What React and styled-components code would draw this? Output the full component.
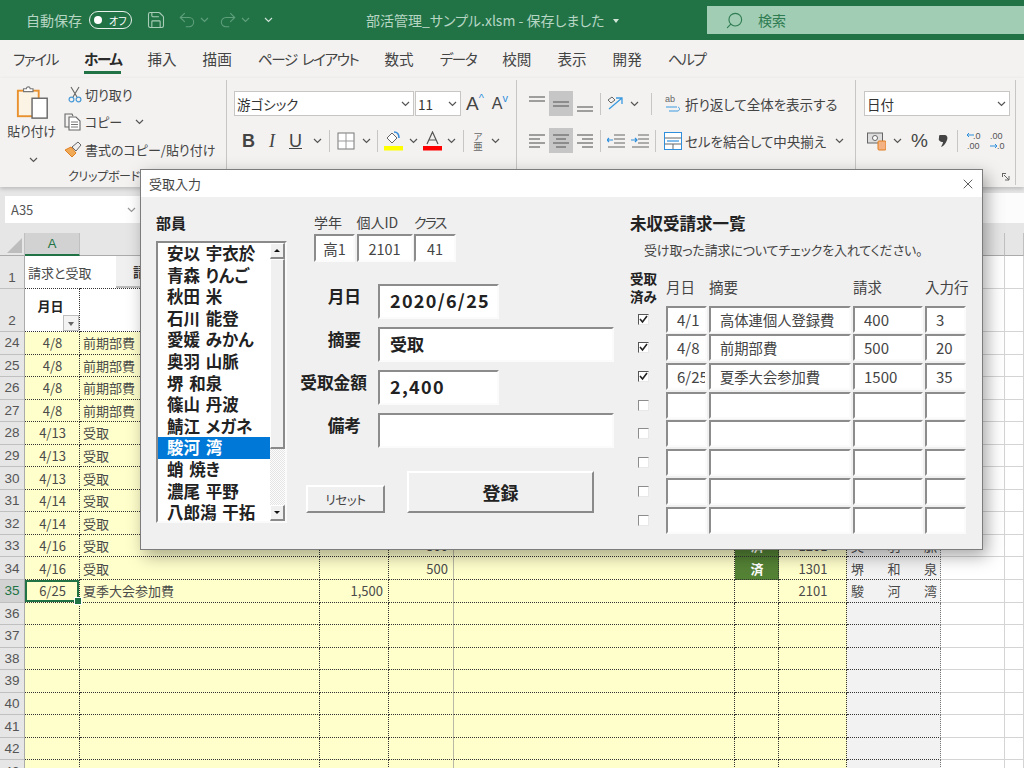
import styled, { createGlobalStyle } from 'styled-components';
import { Search, X, Save, Undo2, Redo2 } from 'lucide-react';

const GlobalStyle = createGlobalStyle`
  html, body {
    margin: 0;
    padding: 0;
    background: #fff;
    overflow: hidden;
  }
  body {
    font-family: "Noto Sans CJK JP", "Noto Sans", sans-serif;
    font-feature-settings: "palt";
    color: #444;
  }
  * { box-sizing: border-box; }
`;

const Page = styled.div`
  position: relative;
  width: 1024px;
  height: 768px;
  overflow: hidden;
  display: flex;
  flex-direction: column;
`;

/* title bar */
const TitleBar = styled.div`
  height: 40px;
  flex: none;
  background: #217346;
  display: flex;
  align-items: center;
  color: #b7d5c3;
  font-size: 14px;
  padding-left: 26px;
`;

const AutoSave = styled.span`
  width: 63px;
`;

const Toggle = styled.div`
  width: 43px;
  height: 18px;
  border: 1.5px solid #e8f1ec;
  border-radius: 9px;
  display: flex;
  align-items: center;
  gap: 7px;
  padding-left: 4px;
  color: #fff;
  font-size: 10px;
  margin-right: 14px;
  &::before {
    content: "";
    width: 8px;
    height: 8px;
    background: #fff;
    border-radius: 50%;
  }
`;

const QuickIcons = styled.div`
  display: flex;
  align-items: center;
  width: 220px;
`;

const DocTitle = styled.div`
  width: 341px;
  display: flex;
  align-items: center;
  gap: 9px;
  font-size: 14px;
  white-space: nowrap;
`;

const Caret = styled.span`
  width: 0;
  height: 0;
  border: 3.5px solid transparent;
  border-top: 4px solid #d4e5da;
  margin-top: 4px;
`;

const SearchBox = styled.div`
  width: 317px;
  height: 28px;
  background: #a0cdb3;
  display: flex;
  align-items: center;
  gap: 14px;
  padding-left: 18px;
  color: #2f7c52;
  font-size: 14px;
`;

/* tabs */
const Tabs = styled.div`
  height: 38px;
  flex: none;
  background: #f3f2f1;
  display: flex;
  align-items: flex-start;
  padding: 8px 0 0 13px;
  gap: 26px;
  font-size: 14.6px;
  color: #444;
`;

const Tab = styled.div`
  height: 26px;
  line-height: 22px;
  white-space: pre;
  word-spacing: ${(props) => (props.$kana ? 3 : 0)}px;
  letter-spacing: ${(props) => (props.$kana ? -1.4 : 0)}px;
  font-weight: ${(props) => (props.$active ? 700 : 400)};
  color: ${(props) => (props.$active ? '#2b2b2b' : '#444')};
  border-bottom: ${(props) => (props.$active ? '3px solid #217346' : '3px solid transparent')};
`;

/* ribbon */
const Ribbon = styled.div`
  height: 109px;
  flex: none;
  background: #f3f2f1;
  display: flex;
  box-shadow: 0 2px 4px rgba(0, 0, 0, 0.18);
  position: relative;
  z-index: 1;
  font-size: 13px;
  color: #444;
`;

const Group = styled.div`
  width: ${(props) => props.$w}px;
  height: 105px;
  margin-top: 2px;
  border-right: 1px solid #c8c6c4;
  flex: none;
  position: relative;
  display: flex;
  flex-direction: column;
`;

const ClipGrid = styled.div`
  display: flex;
  padding-top: 5px;
  height: 87px;
`;

const PasteCol = styled.div`
  width: 61px;
  display: flex;
  flex-direction: column;
  align-items: center;
  padding-left: 5px;
  font-size: 13px;
  letter-spacing: -0.2px;
  white-space: nowrap;
`;

const PasteLabel = styled.span`
  margin: 1px 0 0 -3px;
`;

const PasteChevron = styled.span`
  margin-top: 8px;
`;

const ClipActions = styled.div`
  display: flex;
  flex-direction: column;
  gap: 5.5px;
  margin-top: -2px;
`;

const ClipAction = styled.div`
  height: 22px;
  display: flex;
  align-items: center;
  gap: 3px;
  white-space: nowrap;
  font-size: 13px;
`;

const IconSlot = styled.span`
  width: 21px;
  display: flex;
  justify-content: flex-end;
`;

const GroupLabel = styled.div`
  font-size: 12px;
  letter-spacing: -0.3px;
  margin-left: 68px;
  white-space: nowrap;
`;

const ToolRow = styled.div`
  display: flex;
  align-items: center;
  height: 25px;
  margin-top: ${(props) => props.$mt || 0}px;
  padding-left: ${(props) => props.$pl || 0}px;
`;

const Select = styled.div`
  width: ${(props) => props.$w}px;
  height: 25px;
  background: #fff;
  border: 1px solid #c8c6c4;
  margin-right: ${(props) => props.$mr || 0}px;
  display: flex;
  align-items: center;
  justify-content: space-between;
  padding: 0 3px 0 2px;
  font-size: 13.5px;
  color: #333;
`;

const Sep = styled.span`
  width: 1px;
  height: 22px;
  background: #c8c6c4;
  margin: 0 ${(props) => props.$m ?? 8}px;
  flex: none;
`;

const Gap = styled.span`
  width: ${(props) => props.$w}px;
  flex: none;
`;

const ToolBtn = styled.span`
  display: flex;
  align-items: center;
  justify-content: center;
  width: ${(props) => props.$w || 24}px;
  height: 25px;
  flex: none;
  background: ${(props) => (props.$on ? '#c6c6c6' : 'transparent')};
`;

const Glyph = styled.span`
  font-family: ${(props) => (props.$serif ? '"Liberation Serif", serif' : '"Liberation Sans", sans-serif')};
  font-size: ${(props) => props.$size || 18}px;
  font-weight: ${(props) => (props.$bold ? 700 : 400)};
  font-style: ${(props) => (props.$italic ? 'italic' : 'normal')};
  text-decoration: ${(props) => (props.$under ? 'underline' : 'none')};
  color: ${(props) => props.$color || '#444'};
  margin-left: ${(props) => props.$ml || 0}px;
  margin-bottom: ${(props) => props.$mb || 0}px;
  line-height: 1;
`;

const PhoneticGlyph = styled.span`
  font-size: 9.5px;
  line-height: 10px;
  color: #666;
  width: 14px;
  text-align: center;
`;

const ToolText = styled.span`
  font-size: 13.5px;
  white-space: nowrap;
  margin-left: 3px;
`;

const Launcher = styled.svg`
  position: absolute;
  right: 5px;
  bottom: 4px;
`;

/* formula bar */
const FormulaBar = styled.div`
  height: 46px;
  flex: none;
  background: #e6e6e6;
  display: flex;
  align-items: flex-start;
  padding: 9px 0 0 5px;
  gap: 6px;
`;

const NameBox = styled.div`
  width: 135px;
  height: 27px;
  background: #fff;
  padding: 0 4px 0 6px;
  font-size: 13px;
  color: #555;
  display: flex;
  justify-content: space-between;
  align-items: center;
`;

const FormulaInput = styled.div`
  flex: 1;
  height: 30px;
  margin-top: -3px;
  background: #fcfcfc;
`;

/* sheet */
const COLS = '25px 55px 240px 69px 65px 281px 44px 68px 94px 64px 1fr';

const Row = styled.div`
  display: grid;
  grid-template-columns: ${COLS};
  height: ${(props) => props.$h || 22.55}px;
  flex: none;
`;

const HeadCell = styled.div`
  background: ${(props) => (props.$on ? '#d2d2d2' : '#e6e6e6')};
  color: ${(props) => (props.$on ? '#217346' : '#555')};
  font-family: "Liberation Sans", sans-serif;
  font-size: 13px;
  display: flex;
  align-items: center;
  justify-content: center;
  border-right: 1px solid #c0c0c0;
  border-bottom: ${(props) => (props.$on ? '2px solid #217346' : '1px solid #ababab')};
`;

const Corner = styled.div`
  background: #e6e6e6;
  border-right: 1px solid #c0c0c0;
  border-bottom: 1px solid #ababab;
  position: relative;
  &::after {
    content: "";
    position: absolute;
    right: 2px;
    bottom: 2px;
    border-style: solid;
    border-width: 0 0 15px 15px;
    border-color: transparent transparent #bdbdbd transparent;
  }
`;

const RowHead = styled.div`
  background: ${(props) => (props.$on ? '#d2d2d2' : '#e6e6e6')};
  color: ${(props) => (props.$on ? '#217346' : '#555')};
  font-family: "Liberation Sans", sans-serif;
  font-size: 13.5px;
  display: flex;
  justify-content: center;
  align-items: ${(props) => (props.$low ? 'flex-end' : 'center')};
  padding-bottom: ${(props) => (props.$low ? 3 : 0)}px;
  border-bottom: 1px solid #c0c0c0;
  border-right: 1px solid #ababab;
`;

const Cell = styled.div`
  position: relative;
  z-index: ${(props) => (props.$over ? 1 : 'auto')};
  min-width: 0;
  white-space: nowrap;
  font-size: 13px;
  color: #4a4a4a;
  background: ${(props) => props.$bg || '#ffffcc'};
  border-bottom: 1px dotted #333;
  border-right: ${(props) => props.$rb || '1px dotted #333'};
  display: flex;
  align-items: center;
  justify-content: ${(props) => props.$align || 'flex-start'};
  padding: 0 ${(props) => props.$pr ?? 2}px 0 ${(props) => props.$pl ?? 3}px;
`;

const BlankCell = styled.div`
  border-bottom: 1px solid #d4d4d4;
  border-right: 1px solid #d4d4d4;
  background: #fff;
`;

const SelectedCell = styled(Cell)`
  box-shadow: inset 0 0 0 2px #217346;
  &::after {
    content: "";
    position: absolute;
    right: -3px;
    bottom: -3px;
    width: 6px;
    height: 6px;
    background: #217346;
    border: 1px solid #fff;
    z-index: 1;
  }
`;

const TopTag = styled.div`
  margin-left: 36px;
  align-self: stretch;
  flex: 1;
  background: #f0f0f0;
  border-bottom: 2px solid #bbb;
  font-weight: 700;
  font-size: 13px;
  color: #333;
  padding-left: 17px;
  display: flex;
  align-items: center;
`;

const ColumnTitle = styled.strong`
  color: #222;
  margin-bottom: 10px;
`;

const FilterBtn = styled.div`
  position: absolute;
  right: 0;
  bottom: 0;
  width: 16px;
  height: 16px;
  background: #f3f3f3;
  border: 1px solid #bdbdbd;
  display: flex;
  align-items: center;
  justify-content: center;
  &::after {
    content: "";
    border: 3.5px solid transparent;
    border-top: 4px solid #666;
    margin-top: 4px;
  }
`;

const DoneCell = styled(Cell)`
  background: #548235;
  color: #fff;
  font-weight: 700;
`;

/* dialog */
const Dialog = styled.div`
  position: absolute;
  left: 140px;
  top: 169px;
  width: 843px;
  height: 381px;
  background: #f0f0f0;
  border: 1px solid #7c7c7c;
  box-shadow: 4px 6px 16px rgba(0, 0, 0, 0.35);
  z-index: 5;
`;

const DialogTitle = styled.div`
  height: 27px;
  background: #fff;
  display: flex;
  align-items: center;
  justify-content: space-between;
  padding: 0 6px 0 8px;
  font-size: 13px;
  color: #444;
`;

const DialogBody = styled.div`
  display: grid;
  grid-template-columns: 131px 314px 336px;
  column-gap: 13px;
  padding: 16px 0 0 15px;
`;

const SectionLabel = styled.div`
  font-weight: 700;
  font-size: 15px;
  line-height: 20px;
  color: #222;
  margin-bottom: 8px;
`;

const ListBox = styled.div`
  height: 282px;
  background: #fff;
  border-top: 2px solid #8a8a8a;
  border-left: 2px solid #8a8a8a;
  border-right: 2px solid #fafafa;
  border-bottom: 2px solid #fafafa;
  display: flex;
  overflow: hidden;
`;

const ListItems = styled.div`
  flex: 1;
  min-width: 0;
`;

const ListItem = styled.div`
  height: 21.6px;
  line-height: 20px;
  padding-left: 9px;
  font-size: 16.5px;
  font-weight: 700;
  word-spacing: 2px;
  white-space: nowrap;
  color: ${(props) => (props.$selected ? '#fff' : '#222')};
  background: ${(props) => (props.$selected ? '#0078d7' : 'transparent')};
`;

const ScrollBar = styled.div`
  width: 15px;
  flex: none;
  display: flex;
  flex-direction: column;
`;

const raised = `
  background: #f0f0f0;
  border-top: 1px solid #fff;
  border-left: 1px solid #fff;
  border-right: 2px solid #8a8a8a;
  border-bottom: 2px solid #8a8a8a;
`;

const ScrollButton = styled.div`
  ${raised}
  height: 16px;
  flex: none;
  display: flex;
  align-items: center;
  justify-content: center;
  &::after {
    content: "";
    border-left: 3px solid transparent;
    border-right: 3px solid transparent;
    ${(props) => (props.$down ? 'border-top: 3px solid #111;' : 'border-bottom: 3px solid #111;')}
  }
`;

const ScrollThumb = styled.div`
  ${raised}
  height: 190px;
  flex: none;
`;

const ScrollTrack = styled.div`
  flex: 1;
  background: repeating-conic-gradient(#e4e4e4 0% 25%, #fdfdfd 0% 50%) 0 0 / 2px 2px;
`;

const MiddleCol = styled.div`
  display: flex;
  flex-direction: column;
`;

const InfoGrid = styled.div`
  display: grid;
  grid-template-columns: 41px 56px 42px;
  column-gap: 1.5px;
  row-gap: 3px;
  margin-left: 14px;
`;

const InfoLabel = styled.div`
  font-size: 14px;
  line-height: 18px;
  color: #444;
  white-space: nowrap;
  letter-spacing: ${(props) => (props.$kana ? -1.8 : 0)}px;
`;

const sunken = `
  background: #fff;
  border-top: 2px solid #8c8c8c;
  border-left: 2px solid #8c8c8c;
  border-right: 2px solid #fbfbfb;
  border-bottom: 2px solid #fbfbfb;
`;

const InfoField = styled.div`
  ${sunken}
  height: 28px;
  font-size: 14.5px;
  color: #444;
  display: flex;
  align-items: center;
  justify-content: center;
`;

const FormGrid = styled.div`
  display: grid;
  grid-template-columns: 67px 1fr;
  column-gap: 11px;
  row-gap: 8px;
  margin-top: 22px;
`;

const FieldLabel = styled.div`
  font-size: 16.7px;
  font-weight: 700;
  line-height: 24px;
  color: #222;
  text-align: right;
  white-space: nowrap;
  padding-right: ${(props) => (props.$full ? 0 : 6)}px;
`;

const FieldInput = styled.div`
  ${sunken}
  width: ${(props) => (props.$wide ? 236 : 121)}px;
  height: 35px;
  padding: 0 0 3px 10px;
  font-size: ${(props) => (props.$latin ? 18 : 17)}px;
  letter-spacing: ${(props) => (props.$latin ? 1.3 : 0)}px;
  font-weight: 700;
  color: #222;
  display: flex;
  align-items: center;
`;

const ActionRow = styled.div`
  display: flex;
  align-items: flex-end;
  gap: 22px;
  margin: 23px 0 0 6px;
`;

const Button = styled.div`
  background: #f0f0f0;
  border-top: 2px solid #fff;
  border-left: 2px solid #fff;
  border-right: 2px solid #8a8a8a;
  border-bottom: 2px solid #8a8a8a;
  display: flex;
  align-items: center;
  justify-content: center;
`;

const ResetButton = styled(Button)`
  width: 79px;
  height: 28px;
  font-size: 12.5px;
  letter-spacing: -0.4px;
  color: #444;
`;

const SubmitButton = styled(Button)`
  width: 187px;
  height: 42px;
  font-size: 18px;
  font-weight: 700;
  color: #222;
`;

const RightCol = styled.div`
  margin: -1px 0 0 3px;
`;

const RightTitle = styled.div`
  font-weight: 700;
  font-size: 16.5px;
  line-height: 22px;
  color: #222;
`;

const RightNote = styled.div`
  font-size: 13px;
  line-height: 18px;
  letter-spacing: -0.15px;
  margin: 7px 0 10px 14px;
  color: #444;
  white-space: nowrap;
`;

const BillGrid = styled.div`
  display: grid;
  grid-template-columns: 34px 41px 142px 70px 41px;
  column-gap: 2px;
  row-gap: 1.7px;
  grid-auto-rows: 27px;
  grid-template-rows: 35px;
  width: 336px;
`;

const DoneHead = styled.div`
  font-size: 13.5px;
  font-weight: 700;
  line-height: 18px;
  color: #222;
  white-space: nowrap;
`;

const BillHead = styled.div`
  font-size: 14.5px;
  color: #444;
  display: flex;
  align-items: center;
  white-space: nowrap;
`;

const BillCell = styled.div`
  ${sunken}
  padding-left: ${(props) => props.$pl || 9}px;
  font-size: ${(props) => (props.$text ? 14.3 : 15)}px;
  color: #444;
  overflow: hidden;
  white-space: nowrap;
  display: flex;
  align-items: center;
`;

const CheckWrap = styled.div`
  display: flex;
  align-items: center;
  padding-left: 8px;
`;

const CheckBox = styled.div`
  width: 11px;
  height: 11px;
  background: #fff;
  border-top: 1px solid ${(props) => (props.$on ? '#555' : '#8c8c8c')};
  border-left: 1px solid ${(props) => (props.$on ? '#555' : '#8c8c8c')};
  border-right: 1px solid #e8e8e8;
  border-bottom: 1px solid #e8e8e8;
  display: flex;
`;

/* icons */
const Chev = ({ color = '#555', ml = 0 }) => (
  <svg width="9" height="6" viewBox="0 0 9 6" style={{ marginLeft: ml, flex: 'none' }}>
    <path d="M1 1l3.5 3.5L8 1" fill="none" stroke={color} strokeWidth="1.2" />
  </svg>
);

const PasteIcon = () => (
  <svg width="36" height="37" viewBox="0 0 36 37">
    <rect x="2" y="6" width="22" height="27" fill="#fbf3e4" stroke="#e8912d" strokeWidth="2" />
    <path d="M8 7V4h3a2 2 0 0 1 4 0h3v3z" fill="#fff" stroke="#777" strokeWidth="1.2" />
    <rect x="17" y="14" width="16" height="21" fill="#fff" stroke="#666" strokeWidth="1.5" />
  </svg>
);

const ScissorsIcon = () => (
  <svg width="14" height="17" viewBox="0 0 14 17">
    <path d="M3 1l6 10M11 1L5 11" stroke="#666" strokeWidth="1.1" fill="none" />
    <circle cx="3.5" cy="13.5" r="2.4" fill="none" stroke="#4a9ad6" strokeWidth="1.2" />
    <circle cx="10.5" cy="13.5" r="2.4" fill="none" stroke="#4a9ad6" strokeWidth="1.2" />
  </svg>
);

const CopyIcon = () => (
  <svg width="18" height="18" viewBox="0 0 18 18">
    <path d="M5 14H1V1h7l1 2" fill="none" stroke="#666" strokeWidth="1.1" />
    <path d="M5 4h7l4 4v9H5z" fill="#fff" stroke="#666" strokeWidth="1.1" />
    <path d="M7 9h7M7 11.5h7M7 14h7" stroke="#777" strokeWidth="1" />
  </svg>
);

const BrushIcon = () => (
  <svg width="18" height="17" viewBox="0 0 18 17">
    <path d="M1 9l6-3 5 6-4 4z" fill="#f0a957" stroke="#e07f1f" strokeWidth="1" />
    <path d="M8 6l6-5 3 3-5 6z" fill="#eee" stroke="#666" strokeWidth="1" />
  </svg>
);

const Lines = ({ rows }) => (
  <svg width="18" height="18" viewBox="0 0 18 18">
    {rows.map(([x1, x2, y], i) => (
      <path key={i} d={`M${x1} ${y}H${x2}`} stroke="#666" strokeWidth="1.2" />
    ))}
  </svg>
);

const Borders = () => (
  <svg width="18" height="18" viewBox="0 0 18 18">
    <rect x="1" y="1" width="16" height="16" fill="#fff" stroke="#777" strokeWidth="1" />
    <path d="M9 1v16M1 9h16" stroke="#999" strokeWidth="1" />
  </svg>
);

const FillIcon = () => (
  <svg width="19" height="20" viewBox="0 0 19 20">
    <path d="M8 2l5 5-5 5-5-5z" fill="#fff" stroke="#666" strokeWidth="1" />
    <path d="M10 1c3 0 5 2 5 6" fill="none" stroke="#3b8edb" strokeWidth="1.6" />
    <rect x="0" y="15" width="19" height="4.5" fill="#ffff00" />
  </svg>
);

const FontColorIcon = () => (
  <svg width="19" height="20" viewBox="0 0 19 20">
    <path d="M4 13L9.5 1 15 13M6 9h7" fill="none" stroke="#555" strokeWidth="1.2" />
    <rect x="0" y="15" width="19" height="4.5" fill="#ff0000" />
  </svg>
);

const Orientation = () => (
  <svg width="18" height="18" viewBox="0 0 18 18">
    <path d="M2 14L15 3M9 3h6v6" fill="none" stroke="#3b9be0" strokeWidth="1.3" />
    <path d="M1 5l4-3 3 3-4 3z" fill="none" stroke="#666" strokeWidth="1" />
  </svg>
);

const Indent = ({ flip }) => (
  <svg width="18" height="14" viewBox="0 0 18 14">
    <path d="M7 1h11M7 5h11M7 9h11M1 13h17" stroke="#666" strokeWidth="1" />
    <path d={flip ? 'M0 6h6M4 4l2 2-2 2' : 'M6 6H0M2 4L0 6l2 2'} fill="none" stroke="#2f8fdc" strokeWidth="1.2" />
  </svg>
);

const WrapIcon = () => (
  <svg width="18" height="19" viewBox="0 0 18 19">
    <text x="1" y="8" fontSize="9" fontFamily="Liberation Sans" fill="#666">ab</text>
    <path d="M2 13h11M5 17h9c2-1 2-3 0-4" fill="none" stroke="#3b9be0" strokeWidth="1" />
  </svg>
);

const MergeIcon = () => (
  <svg width="18" height="18" viewBox="0 0 18 18">
    <rect x="0.5" y="0.5" width="17" height="17" fill="#fff" stroke="#2f8fdc" strokeWidth="1" />
    <path d="M1 6h16M1 12h16M9 12v5" stroke="#666" strokeWidth="1" />
    <path d="M3 9h12" stroke="#2f8fdc" strokeWidth="1.2" />
  </svg>
);

const Currency = () => (
  <svg width="19" height="20" viewBox="0 0 19 20">
    <rect x="0.5" y="2" width="15" height="10" fill="#ddd" stroke="#666" strokeWidth="1" />
    <circle cx="8" cy="7" r="2.5" fill="#fff" stroke="#666" />
    <rect x="11" y="10" width="8" height="9" rx="1" fill="#f4b183" stroke="#e07f1f" />
  </svg>
);

const Comma = () => (
  <svg width="12" height="14" viewBox="0 0 12 14">
    <path d="M3 1h4c3 0 4 2 3 5-1 3-3 6-6 7 1-2 2-4 2-5-3 0-5-2-4-4 0-2 0-3 1-3z" fill="#444" />
  </svg>
);

const Decimal = ({ grow }) => (
  <svg width="18" height="20" viewBox="0 0 18 20">
    <text x={grow ? 7 : 1} y="8" fontSize="9" fontFamily="Liberation Sans" fill="#555">{grow ? '.0' : '.00'}</text>
    <text x={grow ? 1 : 8} y="18" fontSize="9" fontFamily="Liberation Sans" fill="#555">{grow ? '.00' : '.0'}</text>
    <path d={grow ? 'M8 4H1M3 2L1 4l2 2' : 'M1 15h7M6 13l2 2-2 2'} fill="none" stroke="#2f8fdc" strokeWidth="1" />
  </svg>
);

const CheckMark = () => (
  <svg width="9" height="9" viewBox="0 0 9 9">
    <path d="M1 4l2.5 3L8 1" fill="none" stroke="#222" strokeWidth="1.6" />
  </svg>
);

/* data */
const TABS = [
  { label: 'ファイル', kana: true },
  { label: 'ホーム', kana: true, active: true },
  { label: '挿入' },
  { label: '描画' },
  { label: 'ページ レイアウト', kana: true },
  { label: '数式' },
  { label: 'データ', kana: true },
  { label: '校閲' },
  { label: '表示' },
  { label: '開発' },
  { label: 'ヘルプ', kana: true },
];

const MEMBERS = [
  '安以 宇衣於', '青森 りんご', '秋田 米', '石川 能登', '愛媛 みかん', '奥羽 山脈', '堺 和泉',
  '篠山 丹波', '鯖江 メガネ', '駿河 湾', '蛸 焼き', '濃尾 平野', '八郎潟 干拓',
];

const BILLS = [
  { date: '4/1', memo: '高体連個人登録費', amount: '400', line: '3' },
  { date: '4/8', memo: '前期部費', amount: '500', line: '20' },
  { date: '6/25', memo: '夏季大会参加費', amount: '1500', line: '35' },
  {}, {}, {}, {}, {},
];

const ROWS = [
  { n: 24, date: '4/8', memo: '前期部費' },
  { n: 25, date: '4/8', memo: '前期部費' },
  { n: 26, date: '4/8', memo: '前期部費' },
  { n: 27, date: '4/8', memo: '前期部費' },
  { n: 28, date: '4/13', memo: '受取' },
  { n: 29, date: '4/13', memo: '受取' },
  { n: 30, date: '4/13', memo: '受取' },
  { n: 31, date: '4/14', memo: '受取' },
  { n: 32, date: '4/14', memo: '受取' },
  { n: 33, date: '4/16', memo: '受取', paid: '500', done: true, id: '1201', name: ['奥', '羽', '脈'] },
  { n: 34, date: '4/16', memo: '受取', paid: '500', done: true, id: '1301', name: ['堺', '和', '泉'] },
  { n: 35, date: '6/25', memo: '夏季大会参加費', bill: '1,500', id: '2101', name: ['駿', '河', '湾'], selected: true },
  { n: 36 }, { n: 37 }, { n: 38 }, { n: 39 }, { n: 40 }, { n: 41 }, { n: 42 }, { n: 43 },
];

const ALIGN_V = {
  top: [[1, 17, 2], [1, 17, 6]],
  middle: [[1, 17, 7], [1, 17, 11]],
  bottom: [[1, 17, 12], [1, 17, 16]],
};

const ALIGN_H = {
  left: [[1, 17, 3], [1, 12, 7], [1, 17, 11], [1, 12, 15]],
  center: [[1, 17, 3], [4, 14, 7], [1, 17, 11], [4, 14, 15]],
  right: [[1, 17, 3], [6, 17, 7], [1, 17, 11], [6, 17, 15]],
};

function SheetRow({ row }) {
  const DateCell = row.selected ? SelectedCell : Cell;
  const FlagCell = row.done ? DoneCell : Cell;
  const solid = '1px solid #b9b9a6';
  return (
    <Row>
      <RowHead $on={row.selected}>{row.n}</RowHead>
      <DateCell $align="center">{row.date}</DateCell>
      <Cell>{row.memo}</Cell>
      <Cell $align="flex-end" $pr={5}>{row.bill}</Cell>
      <Cell $align="flex-end" $pr={5} $rb={solid}>{row.paid}</Cell>
      <Cell />
      <FlagCell $align="center">{row.done && '済'}</FlagCell>
      <Cell $align="center">{row.id}</Cell>
      <Cell $bg="#f2f2f2" $rb="1px dotted #777" $align="space-between" $pl={4} $pr={3}>
        {row.name && row.name.map((c) => <span key={c}>{c}</span>)}
      </Cell>
      <BlankCell />
      <BlankCell />
    </Row>
  );
}

function Sheet() {
  const columns = ['b', 'c', 'd', 'e', 'f', 'g', 'h', 'i', 'j'];
  return (
    <div>
      <Row $h={23}>
        <Corner />
        <HeadCell $on>A</HeadCell>
        {columns.map((c) => <HeadCell key={c} />)}
      </Row>
      <Row $h={33}>
        <RowHead $low>1</RowHead>
        <Cell $bg="#fff" $rb="none" $over>請求と受取</Cell>
        <Cell $bg="#fff" $pl={0} $pr={0} $rb="none"><TopTag>請求入力</TopTag></Cell>
        {columns.slice(1).map((c) => <BlankCell key={c} />)}
      </Row>
      <Row $h={43}>
        <RowHead $low>2</RowHead>
        <Cell $bg="#fff" $align="center" $pr={6}>
          <ColumnTitle>月日</ColumnTitle>
          <FilterBtn />
        </Cell>
        <Cell $bg="#fff" />
        {columns.slice(1).map((c) => <BlankCell key={c} />)}
      </Row>
      {ROWS.map((row) => <SheetRow key={row.n} row={row} />)}
    </div>
  );
}

function RibbonBar() {
  return (
    <Ribbon>
      <Group $w={227}>
        <ClipGrid>
          <PasteCol>
            <PasteIcon />
            <PasteLabel>貼り付け</PasteLabel>
            <PasteChevron><Chev /></PasteChevron>
          </PasteCol>
          <ClipActions>
            <ClipAction><IconSlot><ScissorsIcon /></IconSlot>切り取り</ClipAction>
            <ClipAction><IconSlot><CopyIcon /></IconSlot>コピー<Chev ml={10} /></ClipAction>
            <ClipAction><IconSlot><BrushIcon /></IconSlot>書式のコピー/貼り付け</ClipAction>
          </ClipActions>
        </ClipGrid>
        <GroupLabel>クリップボード</GroupLabel>
      </Group>

      <Group $w={290}>
        <ToolRow $mt={11} $pl={7}>
          <Select $w={180} $mr={1}>游ゴシック<Chev /></Select>
          <Select $w={46}>11<Chev /></Select>
          <Glyph $size={19} $ml={5}>A</Glyph>
          <Glyph $size={11} $color="#2f8fdc" $mb={10}>^</Glyph>
          <Glyph $size={16} $ml={8}>A</Glyph>
          <Glyph $size={11} $color="#2f8fdc" $mb={10}>v</Glyph>
        </ToolRow>
        <ToolRow $mt={12} $pl={15}>
          <Glyph $bold $size={18}>B</Glyph>
          <Glyph $italic $serif $size={18} $ml={14}>I</Glyph>
          <Glyph $under $size={18} $ml={14}>U</Glyph>
          <Chev ml={11} />
          <Sep $m={7} />
          <Borders />
          <Chev ml={7} />
          <Sep $m={6} />
          <FillIcon />
          <Chev ml={6} />
          <Gap $w={5} />
          <FontColorIcon />
          <Chev ml={5} />
          <Sep $m={7} />
          <PhoneticGlyph>ア<br />亜</PhoneticGlyph>
          <Chev ml={6} />
        </ToolRow>
      </Group>

      <Group $w={339}>
        <ToolRow $mt={11} $pl={8}>
          <ToolBtn><Lines rows={ALIGN_V.top} /></ToolBtn>
          <ToolBtn $on><Lines rows={ALIGN_V.middle} /></ToolBtn>
          <ToolBtn><Lines rows={ALIGN_V.bottom} /></ToolBtn>
          <Sep $m={3} />
          <ToolBtn><Orientation /></ToolBtn>
          <Chev ml={2} />
          <Sep $m={12} />
          <WrapIcon />
          <ToolText>折り返して全体を表示する</ToolText>
        </ToolRow>
        <ToolRow $mt={12} $pl={8}>
          <ToolBtn><Lines rows={ALIGN_H.left} /></ToolBtn>
          <ToolBtn $on><Lines rows={ALIGN_H.center} /></ToolBtn>
          <ToolBtn><Lines rows={ALIGN_H.right} /></ToolBtn>
          <Sep $m={3} />
          <ToolBtn><Indent /></ToolBtn>
          <ToolBtn><Indent flip /></ToolBtn>
          <Sep $m={3} />
          <Gap $w={5} />
          <MergeIcon />
          <ToolText>セルを結合して中央揃え</ToolText>
          <Chev ml={9} />
        </ToolRow>
      </Group>

      <Group $w={160}>
        <ToolRow $mt={11} $pl={8}>
          <Select $w={146}>日付<Chev /></Select>
        </ToolRow>
        <ToolRow $mt={12} $pl={11}>
          <Currency />
          <Chev ml={7} />
          <Glyph $size={19} $ml={9}>%</Glyph>
          <Gap $w={9} />
          <Comma />
          <Sep $m={8} />
          <Decimal grow />
          <Gap $w={5} />
          <Decimal />
        </ToolRow>
        <Launcher width="8" height="8" viewBox="0 0 8 8">
          <path d="M0 .5h4M.5 0v4M2 2l5 5M3 7h4V3" fill="none" stroke="#666" strokeWidth="1" />
        </Launcher>
      </Group>
    </Ribbon>
  );
}

function ReceiptDialog() {
  return (
    <Dialog>
      <DialogTitle>
        受取入力
        <X size={16} color="#444" strokeWidth={1.3} />
      </DialogTitle>
      <DialogBody>
        <div>
          <SectionLabel>部員</SectionLabel>
          <ListBox>
            <ListItems>
              {MEMBERS.map((name) => (
                <ListItem key={name} $selected={name === '駿河 湾'}>{name}</ListItem>
              ))}
            </ListItems>
            <ScrollBar>
              <ScrollButton />
              <ScrollThumb />
              <ScrollTrack />
              <ScrollButton $down />
            </ScrollBar>
          </ListBox>
        </div>

        <MiddleCol>
          <InfoGrid>
            <InfoLabel>学年</InfoLabel>
            <InfoLabel>個人ID</InfoLabel>
            <InfoLabel $kana>クラス</InfoLabel>
            <InfoField>高1</InfoField>
            <InfoField>2101</InfoField>
            <InfoField>41</InfoField>
          </InfoGrid>
          <FormGrid>
            <FieldLabel>月日</FieldLabel>
            <FieldInput $latin>2020/6/25</FieldInput>
            <FieldLabel>摘要</FieldLabel>
            <FieldInput $wide>受取</FieldInput>
            <FieldLabel $full>受取金額</FieldLabel>
            <FieldInput $latin>2,400</FieldInput>
            <FieldLabel>備考</FieldLabel>
            <FieldInput $wide />
          </FormGrid>
          <ActionRow>
            <ResetButton>リセット</ResetButton>
            <SubmitButton>登録</SubmitButton>
          </ActionRow>
        </MiddleCol>

        <RightCol>
          <RightTitle>未収受請求一覧</RightTitle>
          <RightNote>受け取った請求についてチェックを入れてください。</RightNote>
          <BillGrid>
            <DoneHead>受取<br />済み</DoneHead>
            <BillHead>月日</BillHead>
            <BillHead>摘要</BillHead>
            <BillHead>請求</BillHead>
            <BillHead>入力行</BillHead>
            {BILLS.map((bill, i) => [
              <CheckWrap key={`c${i}`}>
                <CheckBox $on={!!bill.date}>{bill.date && <CheckMark />}</CheckBox>
              </CheckWrap>,
              <BillCell key={`d${i}`}>{bill.date}</BillCell>,
              <BillCell key={`m${i}`} $text>{bill.memo}</BillCell>,
              <BillCell key={`a${i}`}>{bill.amount}</BillCell>,
              <BillCell key={`l${i}`}>{bill.line}</BillCell>,
            ])}
          </BillGrid>
        </RightCol>
      </DialogBody>
    </Dialog>
  );
}

export default function App() {
  return (
    <Page>
      <GlobalStyle />
      <TitleBar>
        <AutoSave>自動保存</AutoSave>
        <Toggle>オフ</Toggle>
        <QuickIcons>
          <Save size={20} color="#a9cdb8" strokeWidth={1.3} />
          <Undo2 size={20} color="#5f9f7c" strokeWidth={1.3} style={{ marginLeft: 11 }} />
          <Chev color="#5f9f7c" ml={3} />
          <Redo2 size={20} color="#5f9f7c" strokeWidth={1.3} style={{ marginLeft: 9 }} />
          <Chev color="#5f9f7c" ml={3} />
          <Chev color="#cfe2d7" ml={14} />
        </QuickIcons>
        <DocTitle>部活管理_サンプル.xlsm - 保存しました<Caret /></DocTitle>
        <SearchBox>
          <Search size={19} color="#2f7c52" strokeWidth={1.4} style={{ transform: 'scaleX(-1)' }} />
          検索
        </SearchBox>
      </TitleBar>
      <Tabs>
        {TABS.map((tab) => (
          <Tab key={tab.label} $active={tab.active} $kana={tab.kana}>{tab.label}</Tab>
        ))}
      </Tabs>
      <RibbonBar />
      <FormulaBar>
        <NameBox>A35<Chev color="#999" /></NameBox>
        <FormulaInput />
      </FormulaBar>
      <Sheet />
      <ReceiptDialog />
    </Page>
  );
}
